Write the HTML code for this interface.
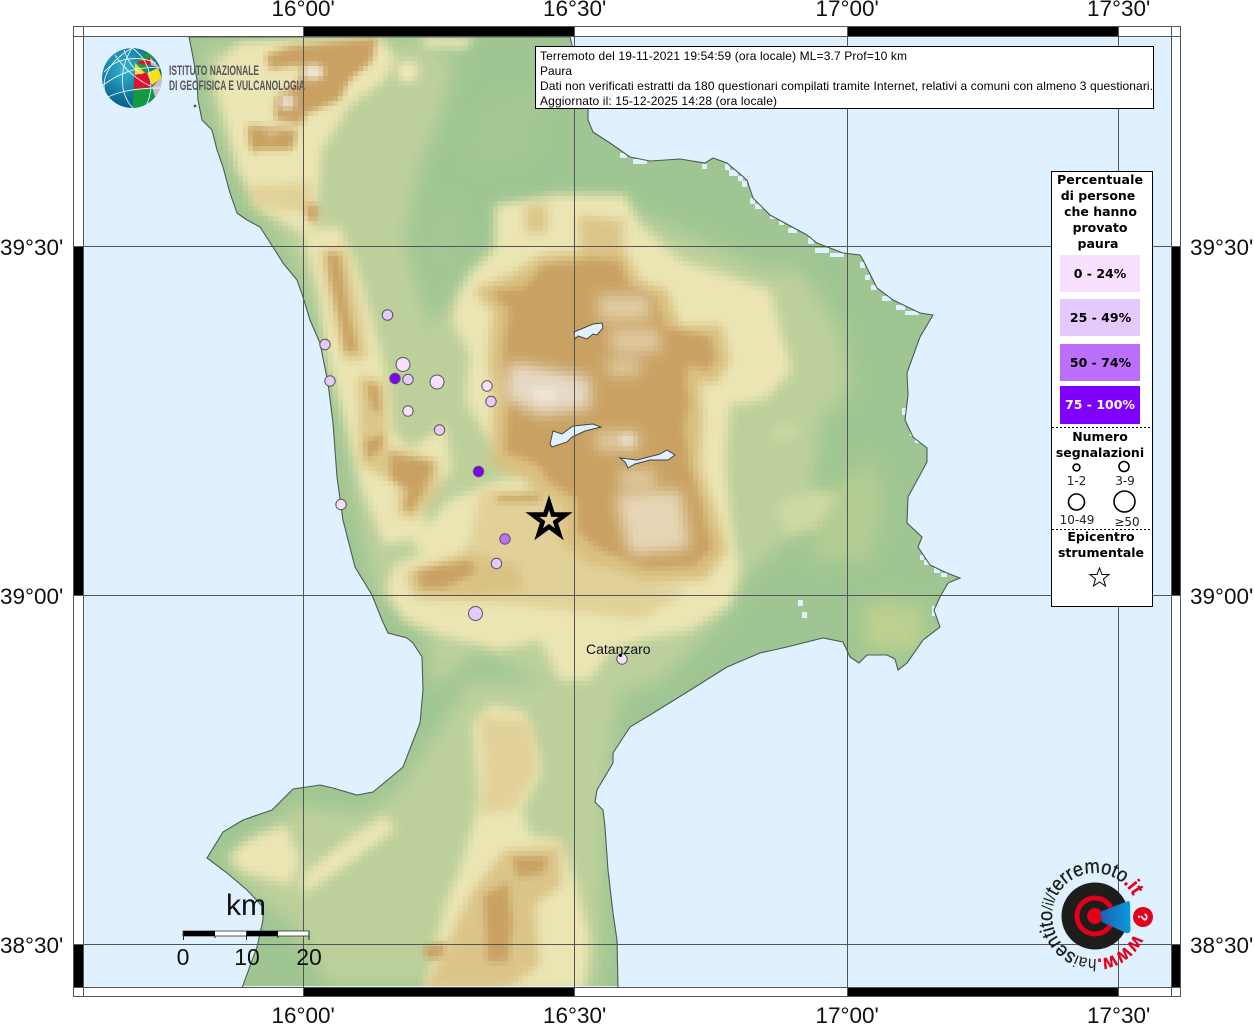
<!DOCTYPE html>
<html><head><meta charset="utf-8"><title>Terremoto</title>
<style>html,body{margin:0;padding:0;background:#fff;width:1254px;height:1024px;overflow:hidden}svg{display:block}
.g{font:22.5px "Liberation Sans",sans-serif;fill:#111}
.t{font:12px "Liberation Sans",sans-serif;fill:#000}
.l{font:bold 12.5px "DejaVu Sans",sans-serif;fill:#000;text-anchor:middle}
.n{font:12px "DejaVu Sans",sans-serif;fill:#222;text-anchor:middle}
.s{font:23px "Liberation Sans",sans-serif;fill:#111;text-anchor:middle}
</style></head><body>
<svg width="1254" height="1024" viewBox="0 0 1254 1024" xmlns="http://www.w3.org/2000/svg">
<defs>
<path id="land" d="M189 37L193 57L197 80L198 100L202 120L212 130L217 150L223 167L230 193L237 213L247 220L260 227L273 247L283 263L297 280L303 297L310 320L320 343L328 383L333 423L337 477L343 520L355 567L372 595L382 620L388 633L407 638L413 643L422 657L423 690L420 723L403 767L390 778L373 792L357 795L333 788L320 785L293 789L272 810L243 820L223 832L207 858L227 873L247 890L263 907L263 920L257 947L242 988L618 988L617 940L613 913L608 870L605 827L603 810L595 802L597 790L613 763L613 753L630 727L650 715L692 689L727 667L760 653L787 647L823 638L843 642L850 657L859 663L867 655L887 655L895 659L898 670L907 663L923 640L940 627L934 610L940 597L948 583L960 578L947 573L930 565L918 547L922 537L907 523L908 497L927 462L927 448L913 437L905 420L908 395L907 373L920 337L933 315L920 313L893 300L877 288L863 260L860 255L843 253L817 243L807 235L770 215L753 198L747 180L727 163L713 158L705 163L680 159L650 161L630 157L610 143L593 132L588 120L588 109L570 37Z"/>
<clipPath id="lc"><use href="#land"/></clipPath>
<clipPath id="inner"><rect x="83" y="36" width="1088" height="952"/></clipPath>
<filter id="b9" x="-30%" y="-30%" width="160%" height="160%"><feGaussianBlur stdDeviation="9"/></filter>
<filter id="b7" x="-30%" y="-30%" width="160%" height="160%"><feGaussianBlur stdDeviation="7"/></filter>
<filter id="b5" x="-30%" y="-30%" width="160%" height="160%"><feGaussianBlur stdDeviation="5"/></filter>
<filter id="b3" x="-30%" y="-30%" width="160%" height="160%"><feGaussianBlur stdDeviation="3.5"/></filter>
<filter id="pix" filterUnits="userSpaceOnUse" primitiveUnits="userSpaceOnUse" x="83" y="36" width="1088" height="952" color-interpolation-filters="sRGB">
<feFlood x="85" y="38" width="1" height="1" flood-color="#000"/>
<feComposite x="83" y="36" width="5" height="5" operator="over"/>
<feTile result="dots"/>
<feComposite in="SourceGraphic" in2="dots" operator="in"/>
<feMorphology operator="dilate" radius="2"/>
</filter>
<radialGradient id="sph" cx="38%" cy="35%" r="75%"><stop offset="0" stop-color="#37b4cf"/><stop offset=".6" stop-color="#11759f"/><stop offset="1" stop-color="#084f78"/></radialGradient>
<linearGradient id="cone" x1="0" x2="1"><stop offset="0" stop-color="#1c5fae"/><stop offset="1" stop-color="#0a9ade"/></linearGradient>
<clipPath id="sc"><circle cx="132" cy="78" r="30"/></clipPath>
<path id="ring" d="M1134 934.2A43 43 0 1 1 1133 895.8"/>
</defs>

<rect x="83" y="36" width="1088" height="952" fill="#dff1fe"/>
<g clip-path="url(#inner)">
<g clip-path="url(#lc)">
<g filter="url(#pix)">
<rect x="83" y="36" width="1088" height="952" fill="#9fc692"/>
<g filter="url(#b9)" fill="#bdd09b">
<path d="M200 45L410 40L455 60L440 120L420 165L405 240L430 330L470 270L560 200L640 215L700 240L760 270L800 270L840 330L850 390L820 420L810 520L750 570L720 620L660 680L600 700L560 690L480 650L430 690L430 640L375 590L355 500L340 380L300 270L240 180L210 100Z"/>
<path d="M820 500L870 460L885 500L870 560L810 560Z" fill="#b4cc93"/>
<path d="M860 610L885 600L925 610L920 650L868 650Z" fill="#bdd08f"/>
<path d="M225 860L262 830L300 805L360 815L395 795L445 720L470 680L620 690L608 770L600 985L330 985L290 920L260 900Z"/>
<path d="M480 110L540 90L530 150L470 170Z" fill="#a5c893"/>
<path d="M430 240L450 190L460 240L440 300Z" fill="#a5c893"/>
</g>
<g filter="url(#b5)" fill="#ebe5b3">
<path d="M212 70L240 42L380 36L395 60L385 80L350 105L322 150L318 195L305 235L262 210L238 170L222 110Z"/>
<path d="M252 190L300 180L318 210L315 235L270 205Z"/>
<path d="M303 235L338 225L358 270L372 320L388 380L392 430L410 450L445 425L452 470L420 500L428 535L385 545L362 490L345 420L328 360L318 290Z"/>
<path d="M460 292L472 272L495 250L495 205L560 195L625 195L640 225L680 260L770 290L778 320L792 370L765 400L730 405L725 460L730 520L740 570L730 605L690 630L640 640L610 650L590 680L560 680L540 640L500 650L440 635L405 620L385 590L395 565L440 545L485 510L520 470L490 440L465 400L470 355L452 320Z"/>
<path d="M450 500L500 480L540 470L540 500L490 530L445 560L410 545Z"/>
<path d="M425 990L445 905L460 870L480 800L472 725L490 705L525 712L542 770L522 810L530 835L560 840L575 880L590 940L585 990Z"/>
<path d="M228 858L248 840L285 825L300 860L290 885L245 872Z"/>
<path d="M302 875L350 838L385 815L395 830L340 870L302 895Z"/>
<path d="M420 36L470 36L470 48L425 48ZM398 62L418 62L418 80L398 80Z"/>
<path d="M773 427L797 427L797 438L773 438ZM777 505L810 490L840 495L815 530L785 535Z" fill="#cdd8a3"/>
</g>
<g filter="url(#b5)" fill="#e1d199">
<path d="M480 490L570 490L575 540L600 570L650 585L690 590L640 620L560 610L470 600L440 590L470 540Z"/>
<path d="M525 205L548 205L546 235L525 232Z" fill="#dcc68a"/>
<path d="M578 215L625 220L620 262L580 262Z" fill="#dcc68a"/>
<path d="M540 255L623 247L640 280L667 290L680 325L722 325L730 362L715 385L700 380L703 420L700 465L712 500L728 550L705 580L647 583L590 565L562 545L563 505L540 495L525 480L492 465L493 400L488 357L493 312L473 290L515 273Z" fill="#d9bf80"/>
<path d="M478 715L530 722L538 770L515 810L480 815L485 770Z"/>
<path d="M435 970L470 895L505 850L560 845L562 885L535 905L540 965L505 990L425 990Z" fill="#dbc489"/>
<path d="M250 186L312 182L312 214L252 208Z"/>
<path d="M320 250L345 248L362 320L368 358L345 362L332 310Z" fill="#dcc68a"/>
<path d="M358 375L385 380L388 450L395 448L440 462L438 490L415 520L398 515L398 485L360 465Z" fill="#dcc68a"/>
<path d="M405 572L470 552L520 565L525 592L470 600L415 598Z" fill="#d9c284"/>
</g>
<g filter="url(#b3)" fill="#c9a263">
<path d="M265 55L290 46L378 37L372 62L350 80L340 100L305 115L302 125L275 120L275 98L300 80L300 65L270 70Z"/>
<path d="M247 125L298 130L293 150L258 150L255 155L249 145Z"/>
<path d="M306 202L320 207L316 225L306 218Z"/>
<path d="M327 252L340 255L345 290L350 320L358 350L345 353L340 320L330 280Z"/>
<path d="M366 382L379 387L381 413L372 410ZM364 441L384 434L381 449L368 460Z"/>
<path d="M390 453L433 462L430 477L420 498L410 513L404 508L408 490L390 478Z"/>
<path d="M417 572L440 566L470 560L476 572L445 588L421 588Z"/>
<path d="M495 496L540 494L540 502L497 502Z"/>
<path d="M543 265L575 262L593 258L620 262L628 284L655 297L665 327L710 337L716 358L707 370L688 365L685 385L690 400L684 427L690 467L700 500L712 548L695 566L647 569L599 549L577 531L577 500L550 482L537 464L505 452L508 400L503 357L509 310L492 292L524 287Z"/>
<path d="M484 895L508 882L513 925L508 962L487 962Z"/>
<path d="M512 857L548 857L544 873L517 878Z"/>
<path d="M422 947L446 942L443 958L427 960Z"/>
</g>
<g filter="url(#b7)" fill="#e0ccA4">
<path d="M597 295L650 295L650 320L600 320Z"/>
<path d="M610 330L660 330L660 352L612 352Z"/>
<path d="M607 360L640 360L640 375L607 375Z"/>
<path d="M596 432L640 432L640 450L596 450Z"/>
<path d="M620 470L655 470L655 487L620 487Z"/>
<path d="M510 362L590 378L590 408L540 415L505 398Z" fill="#e6dac6"/>
<path d="M615 495L680 490L690 548L630 555Z" fill="#e6d6b6"/>
</g>
<g filter="url(#b3)">
<ellipse cx="313" cy="72" rx="11" ry="7" fill="#f1e9da"/>
<ellipse cx="287" cy="102" rx="7" ry="7" fill="#ece4da"/>
<ellipse cx="272" cy="132" rx="6" ry="4" fill="#dcc296"/>
<ellipse cx="545" cy="395" rx="12" ry="6" fill="#ede6da"/>
<ellipse cx="627" cy="440" rx="7" ry="6" fill="#e8dfd0"/>
<ellipse cx="407" cy="74" rx="4" ry="6" fill="#f1edc6"/>
</g>
</g>
<g fill="#dff1fe">
<rect x="620" y="153" width="7" height="5"/><rect x="633" y="159" width="14" height="5"/><rect x="702" y="164" width="5" height="5"/><rect x="725" y="164" width="5" height="6"/><rect x="729" y="170" width="9" height="6"/><rect x="738" y="176" width="5" height="5"/><rect x="742" y="181" width="5" height="6"/><rect x="750" y="198" width="5" height="6"/><rect x="755" y="204" width="7" height="5"/><rect x="770" y="214" width="9" height="5"/><rect x="779" y="220" width="5" height="5"/><rect x="788" y="228" width="9" height="5"/><rect x="808" y="238" width="6" height="6"/><rect x="815" y="248" width="14" height="5"/><rect x="830" y="253" width="14" height="4"/><rect x="860" y="262" width="5" height="6"/><rect x="865" y="275" width="5" height="5"/><rect x="871" y="285" width="6" height="5"/><rect x="882" y="296" width="9" height="5"/><rect x="896" y="305" width="9" height="5"/><rect x="905" y="311" width="14" height="4"/><rect x="902" y="408" width="4" height="7"/><rect x="910" y="430" width="5" height="6"/><rect x="915" y="438" width="5" height="5"/><rect x="920" y="555" width="4" height="5"/><rect x="924" y="560" width="5" height="5"/><rect x="934" y="568" width="6" height="5"/><rect x="941" y="573" width="6" height="4"/><rect x="798" y="600" width="5" height="6"/><rect x="802" y="612" width="5" height="6"/><rect x="932" y="606" width="3" height="10"/>
</g>
</g>
<use href="#land" fill="none" stroke="#4d5a55" stroke-width="1.1"/>
<g fill="#dff1fe" stroke="#444" stroke-width="1">
<path d="M574 332L593 324L602 323L603 328L597 335L593 334L587 339L578 336L575 339Z"/>
<path d="M553 431L562 434L573 426L593 424L601 427L585 431L572 437L567 442L552 447L550 444Z"/>
<path d="M620 458L637 460L660 454L667 450L675 455L668 460L650 460L635 464L628 468L625 462Z"/>
</g>
<circle cx="195" cy="106" r="1.4" fill="#555"/>
</g>

<!-- grid -->
<g fill="#000">
<rect x="303" y="26" width="271" height="10"/><rect x="847" y="26" width="271" height="10"/>
<rect x="303" y="988" width="271" height="9"/><rect x="847" y="988" width="271" height="9"/>
<rect x="73" y="246" width="10" height="349"/><rect x="73" y="944" width="10" height="44"/>
<rect x="1171" y="246" width="10" height="349"/><rect x="1171" y="944" width="10" height="44"/>
</g>
<g stroke="#555" stroke-width="1" fill="none" shape-rendering="crispEdges">
<rect x="73.5" y="26.5" width="1107" height="970"/>
<path d="M83.5 26V997M1171.5 26V997M73 36.5H1181M73 987.5H1181M303.5 26V997M574.5 26V997M847.5 26V997M1118.5 26V997M73 246.5H1181M73 595.5H1181M73 944.5H1181"/>
</g>

<!-- labels -->
<g class="g">
<text class="g" x="271.5" y="16">16°00'</text><text class="g" x="543" y="16">16°30'</text><text class="g" x="815.5" y="16">17°00'</text><text class="g" x="1087" y="16">17°30'</text>
<text class="g" x="271.5" y="1023">16°00'</text><text class="g" x="543" y="1023">16°30'</text><text class="g" x="815.5" y="1023">17°00'</text><text class="g" x="1087" y="1023">17°30'</text>
<text class="g" x="0" y="255">39°30'</text><text class="g" x="0" y="604">39°00'</text><text class="g" x="0" y="953">38°30'</text>
<text class="g" x="1190" y="255">39°30'</text><text class="g" x="1190" y="604">39°00'</text><text class="g" x="1190" y="953">38°30'</text>
</g>

<!-- data points -->
<g stroke="#555" stroke-width="1">
<circle cx="387.5" cy="315" r="5.3" fill="#e4c9fd"/><circle cx="325" cy="344.5" r="5.2" fill="#e4c9fd"/><circle cx="330" cy="381" r="5.2" fill="#e4c9fd"/>
<circle cx="403" cy="364.5" r="7" fill="#f9e0ff"/><circle cx="395" cy="378.5" r="5.2" fill="#7f00ff"/><circle cx="408" cy="379.5" r="5.2" fill="#e4c9fd"/>
<circle cx="437" cy="382" r="7" fill="#f9e0ff"/><circle cx="487" cy="386" r="5.2" fill="#f9e0ff"/><circle cx="491" cy="401.5" r="5.2" fill="#e4c9fd"/>
<circle cx="408" cy="411" r="5.2" fill="#f9e0ff"/><circle cx="439.5" cy="430" r="5.2" fill="#e4c9fd"/><circle cx="478.5" cy="471.5" r="5.2" fill="#7f00ff"/>
<circle cx="341" cy="504.5" r="5.2" fill="#f9e0ff"/><circle cx="505" cy="539" r="5.2" fill="#bb6ffb"/><circle cx="496.5" cy="563.5" r="5.2" fill="#e4c9fd"/>
<circle cx="475.5" cy="613.5" r="7" fill="#e4c9fd"/><circle cx="622" cy="659" r="5.2" fill="#f9e0ff"/>
</g>
<circle cx="620.5" cy="655.5" r="1.5" fill="#000"/>
<text x="586" y="654" font-family="Liberation Sans, sans-serif" font-size="14" fill="#111">Catanzaro</text>
<path d="M549 502.5L552.9 514.6L565.6 514.6L555.4 522.1L559.3 534.2L549 526.7L538.7 534.2L542.6 522.1L532.4 514.6L545.1 514.6Z" fill="none" stroke="#000" stroke-width="4.6" stroke-miterlimit="10"/>

<!-- INGV logo -->
<g clip-path="url(#sc)">
<circle cx="132" cy="78" r="30" fill="url(#sph)"/>
<path d="M137 60L148 52L155 58L138 64Z" fill="#1a9a3c"/>
<path d="M137 63L151 57L151 65L140 64Z" fill="#e30f2b"/>
<path d="M150 57L160 68L151 65Z" fill="#cdbccb"/>
<path d="M135 63L145 73L135 75Z" fill="#f6e10e"/>
<path d="M138 64L150 65L145 72Z" fill="#26953a"/>
<path d="M134 75L147 73L152 87L134 89Z" fill="#e30f2b"/>
<path d="M147 73L158 68L162 78L152 85Z" fill="#f6e10e"/>
<path d="M152 87L162 77L165 90L155 97Z" fill="#cdbccb"/>
<path d="M134 90L152 87L155 97L140 109L132 109Z" fill="#149a3e"/>
<path d="M155 97L162 90L160 98L156 102Z" fill="#e30f2b"/>
<g fill="none" stroke="#e8f4f8" stroke-width=".9">
<path d="M132 48C118 70 120 95 133 108M132 48C150 60 156 85 146 106M132 48C108 62 100 80 106 95"/>
<path d="M104 72C118 56 140 56 156 63M102 86C120 72 140 66 160 68M108 97C122 90 140 88 161 88"/>
<path d="M124 50C128 62 134 70 142 74M115 55C125 70 138 80 150 86"/>
</g>
</g>
<text x="169" y="75" textLength="90" lengthAdjust="spacingAndGlyphs" font-family="Liberation Sans, sans-serif" font-weight="bold" font-size="13.5" fill="#55565a">ISTITUTO NAZIONALE</text>
<text x="169" y="90" textLength="136" lengthAdjust="spacingAndGlyphs" font-family="Liberation Sans, sans-serif" font-weight="bold" font-size="13.5" fill="#55565a">DI GEOFISICA E VULCANOLOGIA</text>

<!-- info box -->
<rect x="535.5" y="46.5" width="618" height="62" fill="#fff" stroke="#000"/>
<text class="t" x="540" y="60" textLength="367" lengthAdjust="spacing">Terremoto del 19-11-2021 19:54:59 (ora locale) ML=3.7 Prof=10 km</text>
<text class="t" x="540" y="75">Paura</text>
<text class="t" x="540" y="90" textLength="613" lengthAdjust="spacing">Dati non verificati estratti da 180 questionari compilati tramite Internet, relativi a comuni con almeno 3 questionari.</text>
<text class="t" x="540" y="105" textLength="237" lengthAdjust="spacing">Aggiornato il: 15-12-2025 14:28 (ora locale)</text>

<!-- legend -->
<rect x="1051.5" y="171.5" width="101" height="435" fill="#fff" stroke="#000"/>
<text class="l" x="1100" y="184" textLength="86">Percentuale</text>
<text class="l" x="1098" y="200">di persone</text>
<text class="l" x="1100.5" y="216">che hanno</text>
<text class="l" x="1100" y="232">provato</text>
<text class="l" x="1098" y="248">paura</text>
<rect x="1060" y="255" width="80" height="37" fill="#f9e0ff"/>
<rect x="1060" y="299" width="80" height="37" fill="#e4c9fd"/>
<rect x="1060" y="344" width="80" height="37" fill="#bb6ffb"/>
<rect x="1060" y="386" width="80" height="38" fill="#7f00ff"/>
<text class="l" x="1100" y="278">0 - 24%</text>
<text class="l" x="1100.5" y="322">25 - 49%</text>
<text class="l" x="1100.5" y="367">50 - 74%</text>
<text class="l" x="1100" y="409" style="fill:#fff">75 - 100%</text>
<path d="M1052 427.5H1152M1052 529.5H1152" stroke="#000" stroke-dasharray="2 2" fill="none"/>
<text class="l" x="1100" y="441">Numero</text>
<text class="l" x="1100" y="457">segnalazioni</text>
<g fill="none" stroke="#000" stroke-width="1.6">
<circle cx="1076.5" cy="467.5" r="3.4"/><circle cx="1124" cy="466.5" r="5"/><circle cx="1076.5" cy="502" r="8"/><circle cx="1124.5" cy="501.5" r="10.5"/>
</g>
<text class="n" x="1076.5" y="485">1-2</text><text class="n" x="1125" y="485">3-9</text>
<text class="n" x="1077" y="524">10-49</text><text class="n" x="1127" y="526">≥50</text>
<text class="l" x="1101" y="541">Epicentro</text>
<text class="l" x="1101" y="557">strumentale</text>
<path d="M1099.5 568L1102 574.5L1109 574.5L1103.5 579L1105.5 586L1099.5 582L1093.5 586L1095.5 579L1090 574.5L1097 574.5Z" fill="#fff" stroke="#000"/>

<!-- scale -->
<text x="226" y="915" font-family="Liberation Sans, sans-serif" font-size="30" fill="#111">km</text>
<rect x="183" y="931" width="126" height="5" fill="#fff" stroke="#333" stroke-width=".8"/>
<rect x="183" y="931" width="32" height="5" fill="#000"/><rect x="246" y="931" width="32" height="5" fill="#000"/>
<path d="M183.5 931V940M246.5 931V940M309 931V940" stroke="#222"/><path d="M215 936V938M278 936V938" stroke="#222"/>
<text class="s" x="183" y="965">0</text><text class="s" x="247" y="965">10</text><text class="s" x="309" y="965">20</text>

<!-- hai sentito logo -->
<circle cx="1095" cy="916" r="33.5" fill="#1d1d1b"/>
<circle cx="1095" cy="916" r="18" fill="none" stroke="#e2001a" stroke-width="5"/>
<circle cx="1095" cy="916" r="8" fill="#e2001a"/>
<path d="M1100 912L1128 901Q1130 901 1130 904L1130.5 930Q1130 934 1126 933L1102 922Z" fill="url(#cone)"/>
<circle cx="1143" cy="917" r="10" fill="#e2001a"/>
<text x="1143" y="922" transform="rotate(90 1143 917)" text-anchor="middle" font-family="Liberation Sans, sans-serif" font-weight="bold" font-size="14" fill="#fff">?</text>
<text font-family="Liberation Sans, sans-serif" font-size="20" fill="#1d1d1b" stroke="#1d1d1b" stroke-width=".3"><textPath href="#ring" textLength="230" lengthAdjust="spacingAndGlyphs"><tspan fill="#e2001a" stroke="#e2001a" font-weight="bold">www.</tspan><tspan font-size="17" stroke="none">hai</tspan><tspan>sentito</tspan><tspan font-size="16" stroke="none">/il/</tspan><tspan>terremoto</tspan><tspan fill="#e2001a" stroke="#e2001a" font-weight="bold">.it</tspan></textPath></text>
</svg>
</body></html>
